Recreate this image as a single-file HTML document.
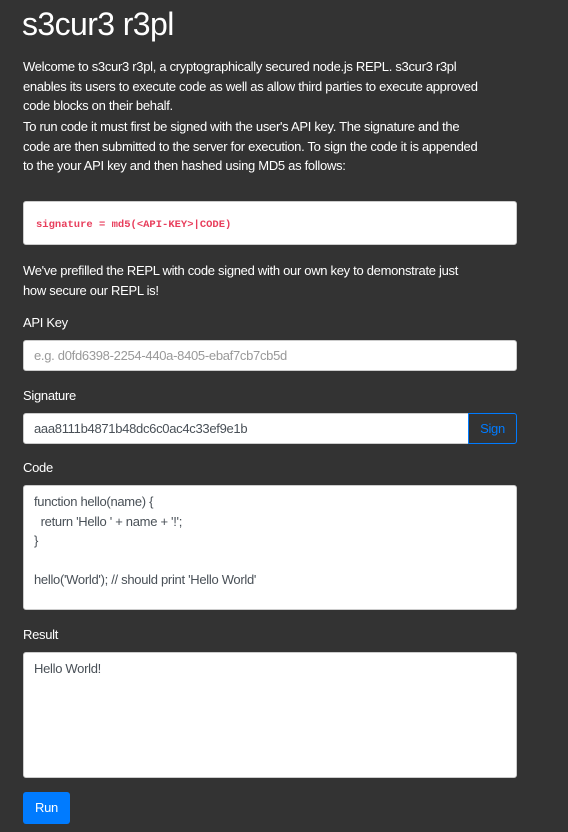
<!DOCTYPE html>
<html><head><meta charset="utf-8"><style>
body{margin:0;background:#333;color:#fff;font-family:"Liberation Sans",sans-serif;font-size:13px;letter-spacing:-0.3px;width:568px;height:832px;overflow:hidden}
.c{position:absolute;left:23px;width:500px;white-space:nowrap}
h1{position:absolute;left:22px;top:4px;margin:0;font-size:32px;font-weight:400;line-height:40px;letter-spacing:-0.6px}
p{margin:0;line-height:19.5px}
.box{position:absolute;left:23px;width:494px;background:#fff;border:1px solid #ccc;border-radius:3px;box-sizing:border-box;color:#495057}
.lbl{position:absolute;left:23px}
</style></head><body>
<h1>s3cur3 r3pl</h1>
<div class="c" style="top:57px"><p>Welcome to s3cur3 r3pl, a cryptographically secured node.js REPL. s3cur3 r3pl<br>enables its users to execute code as well as allow third parties to execute approved<br>code blocks on their behalf.</p></div>
<div class="c" style="top:117px"><p>To run code it must first be signed with the user's API key. The signature and the<br>code are then submitted to the server for execution. To sign the code it is appended<br>to the your API key and then hashed using MD5 as follows:</p></div>
<div class="box" style="top:201px;height:44px;font-family:'Liberation Mono',monospace;font-size:10.5px;letter-spacing:0;font-weight:bold;color:#e83e5c;padding:17px 12px;">signature = md5(&lt;API-KEY&gt;|CODE)</div>
<div class="c" style="top:261px"><p>We've prefilled the REPL with code signed with our own key to demonstrate just<br>how secure our REPL is!</p></div>
<div class="lbl" style="top:315px">API Key</div>
<div class="box" style="top:340px;height:31px;padding:7px 10px;color:#999">e.g. d0fd6398-2254-440a-8405-ebaf7cb7cb5d</div>
<div class="lbl" style="top:388px">Signature</div>
<div class="box" style="top:413px;height:31px;width:446px;padding:7px 10px;border-radius:3px 0 0 3px">aaa8111b4871b48dc6c0ac4c33ef9e1b</div>
<div style="position:absolute;left:468px;top:413px;width:49px;height:31px;box-sizing:border-box;border:1px solid #007bff;border-radius:0 3px 3px 0;color:#007bff;text-align:center;line-height:29px">Sign</div>
<div class="lbl" style="top:460px">Code</div>
<div class="box" style="top:485px;height:125px;padding:6px 10px;line-height:19.5px;white-space:pre">function hello(name) {
  return 'Hello ' + name + '!';
}

hello('World'); // should print 'Hello World'</div>
<div class="lbl" style="top:627px">Result</div>
<div class="box" style="top:652px;height:126px;padding:6px 10px;line-height:19.5px">Hello World!</div>
<div style="position:absolute;left:23px;top:792px;width:47px;height:32px;background:#007bff;border-radius:3px;text-align:center;line-height:32px">Run</div>
</body></html>
